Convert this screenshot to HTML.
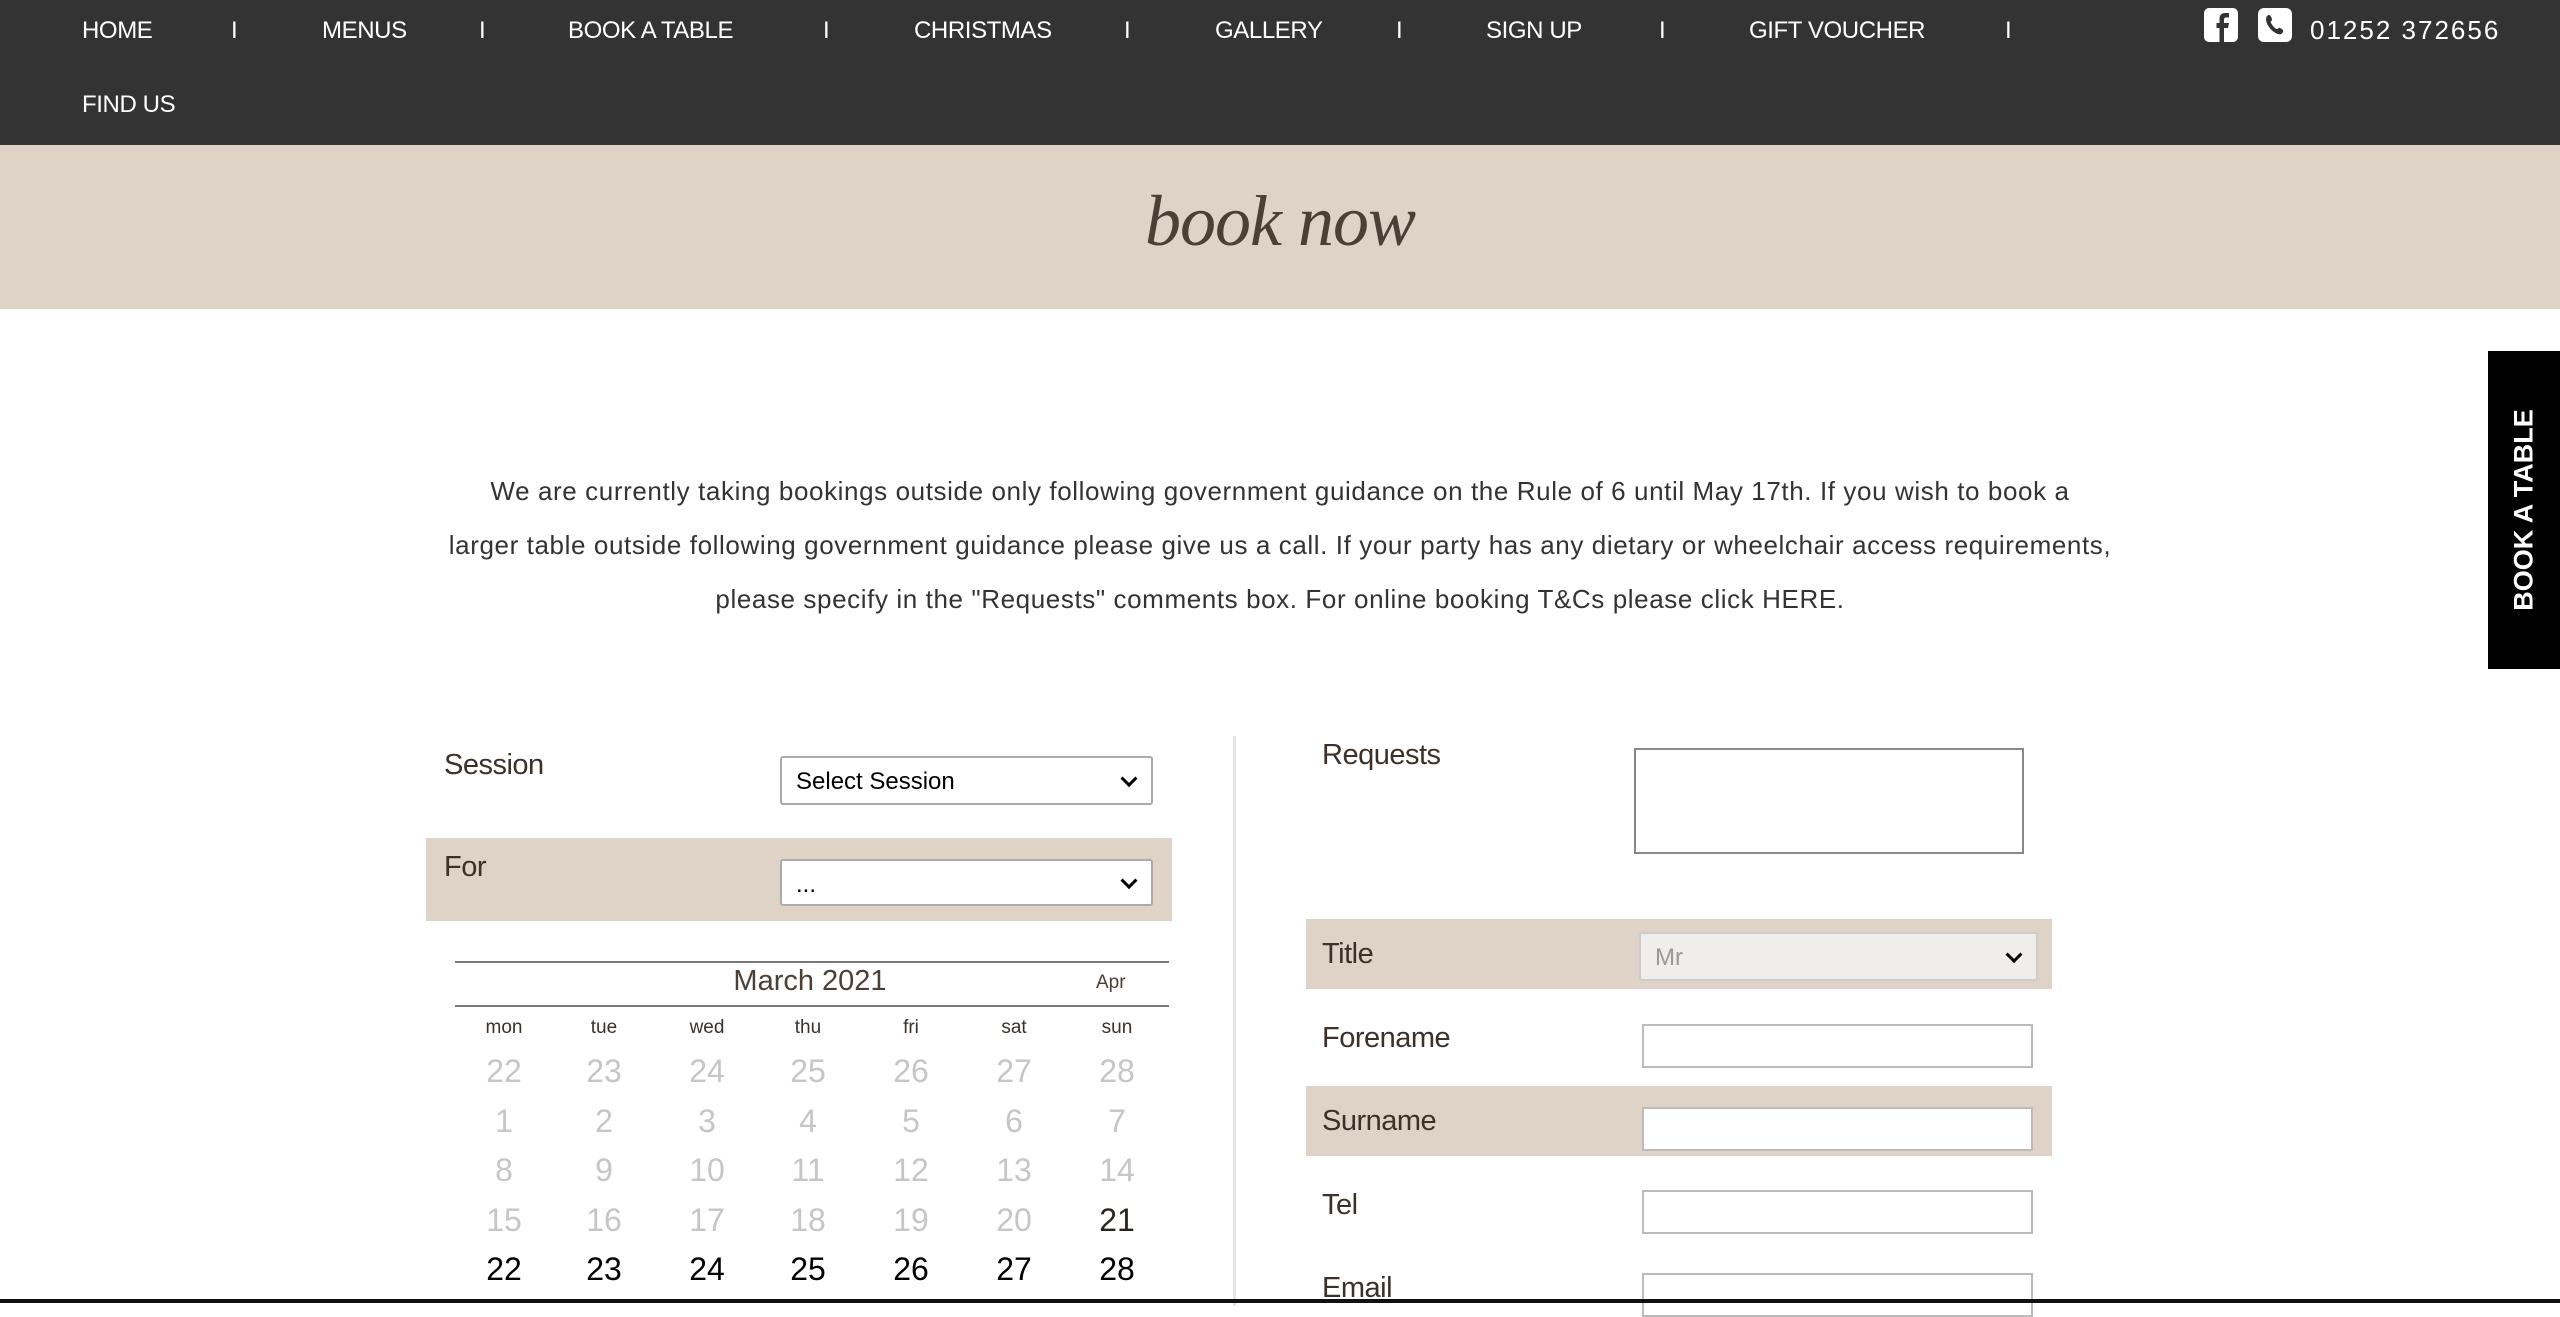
<!DOCTYPE html>
<html><head><meta charset="utf-8"><style>
*{margin:0;padding:0;box-sizing:border-box}
body{width:2560px;height:1303px;overflow:hidden;background:#fff;font-family:"Liberation Sans",sans-serif;position:relative;color:#3b3128}
.a{position:absolute;white-space:nowrap}
.nav{position:absolute;left:0;top:0;width:2560px;height:145px;background:#333}
.n{position:absolute;color:#fff;font-size:24px;top:17px;letter-spacing:-0.4px}
.band{position:absolute;left:0;top:145px;width:2560px;height:164px;background:#ded3c6}
.p{position:absolute;left:420px;width:1720px;top:464px;text-align:center;font-size:26px;line-height:54px;color:#333;letter-spacing:0.6px}
.lbl{position:absolute;font-size:29px;color:#3b3128;letter-spacing:-0.5px}
.sel{position:absolute;background:#fff;border:2px solid #aaa;border-radius:3px;font-size:24px;color:#000;padding:10px 14px}
.sel:after{content:"";position:absolute;right:16px;top:50%;width:9px;height:9px;border-right:3px solid #000;border-bottom:3px solid #000;transform:translateY(-70%) rotate(45deg)}
.inp{position:absolute;background:#fff;border:2px solid #bbb}
.bg{position:absolute;background:#ded3c6}
.c{position:absolute;width:60px;text-align:center;font-size:32px;color:#c6c6c6}
.d{position:absolute;width:60px;text-align:center;font-size:19px;color:#3b3128}
</style></head><body>
<div class="nav"></div>
<div class="n" style="left:82px">HOME</div><div class="n" style="left:231px">I</div>
<div class="n" style="left:322px">MENUS</div><div class="n" style="left:479px">I</div>
<div class="n" style="left:568px">BOOK A TABLE</div><div class="n" style="left:823px">I</div>
<div class="n" style="left:914px">CHRISTMAS</div><div class="n" style="left:1124px">I</div>
<div class="n" style="left:1215px">GALLERY</div><div class="n" style="left:1396px">I</div>
<div class="n" style="left:1486px">SIGN UP</div><div class="n" style="left:1659px">I</div>
<div class="n" style="left:1749px">GIFT VOUCHER</div><div class="n" style="left:2005px">I</div>
<div class="n" style="left:82px;top:91px">FIND US</div>
<svg class="a" style="left:2204px;top:8px" width="34" height="34" viewBox="0 0 34 34"><rect x="0" y="0" width="34" height="34" rx="5" fill="#fff"/><path d="M20 34V20h4l1-5h-5v-3c0-1.5.5-2.5 2-2.5h3V5h-4c-4 0-5.5 2.5-5.5 6v4h-3v5h3v14z" fill="#333"/></svg>
<svg class="a" style="left:2258px;top:8px" width="34" height="34" viewBox="0 0 34 34"><rect x="0" y="0" width="34" height="34" rx="6" fill="#fff"/><path d="M11 7c2 0 3 4 3 5s-2 1-1 3 4 6 6 6 1-2 3-1 4 2 3 4-3 3-5 2C14 24 9 18 8 12 8 9 9 7 11 7z" fill="#333"/></svg>
<div class="n" style="left:2310px;top:15px;letter-spacing:2px;font-size:26px">01252 372656</div>
<div class="band"></div>
<div class="a" style="left:0;width:2560px;top:180px;text-align:center;font-family:'Liberation Serif',serif;font-style:italic;font-size:72px;color:#4a4036;letter-spacing:-1px">book now</div>
<div class="a" style="left:2488px;top:351px;width:72px;height:318px;background:#000"></div>
<div class="a" style="left:2524px;top:510px;color:#fff;font-weight:bold;font-size:27px;transform:translate(-50%,-50%) rotate(-90deg)">BOOK A TABLE</div>
<div class="p">We are currently taking bookings outside only following government guidance on the Rule of 6 until May 17th. If you wish to book a<br>larger table outside following government guidance please give us a call. If your party has any dietary or wheelchair access requirements,<br>please specify in the "Requests" comments box. For online booking T&amp;Cs please click HERE.</div>

<div class="lbl" style="left:444px;top:749px">Session</div>
<div class="sel" style="left:780px;top:756px;width:373px;height:49px">Select Session</div>
<div class="bg" style="left:426px;top:838px;width:746px;height:83px"></div>
<div class="lbl" style="left:444px;top:851px">For</div>
<div class="sel" style="left:780px;top:859px;width:373px;height:47px">...</div>

<div class="a" style="left:455px;top:961px;width:714px;height:2px;background:#777"></div>
<div class="a" style="left:455px;top:1005px;width:714px;height:2px;background:#777"></div>
<div class="a" style="left:700px;top:965px;width:220px;text-align:center;font-size:29px;color:#4a4036">March 2021</div>
<div class="a" style="left:1096px;top:972px;font-size:19px;color:#4a4036">Apr</div>
<div class="d" style="left:474px;top:1017px">mon</div><div class="d" style="left:574px;top:1017px">tue</div><div class="d" style="left:677px;top:1017px">wed</div><div class="d" style="left:778px;top:1017px">thu</div><div class="d" style="left:881px;top:1017px">fri</div><div class="d" style="left:984px;top:1017px">sat</div><div class="d" style="left:1087px;top:1017px">sun</div>

<div class="c" style="left:474px;top:1053px">22</div><div class="c" style="left:574px;top:1053px">23</div><div class="c" style="left:677px;top:1053px">24</div><div class="c" style="left:778px;top:1053px">25</div><div class="c" style="left:881px;top:1053px">26</div><div class="c" style="left:984px;top:1053px">27</div><div class="c" style="left:1087px;top:1053px">28</div>
<div class="c" style="left:474px;top:1103px">1</div><div class="c" style="left:574px;top:1103px">2</div><div class="c" style="left:677px;top:1103px">3</div><div class="c" style="left:778px;top:1103px">4</div><div class="c" style="left:881px;top:1103px">5</div><div class="c" style="left:984px;top:1103px">6</div><div class="c" style="left:1087px;top:1103px">7</div>
<div class="c" style="left:474px;top:1152px">8</div><div class="c" style="left:574px;top:1152px">9</div><div class="c" style="left:677px;top:1152px">10</div><div class="c" style="left:778px;top:1152px">11</div><div class="c" style="left:881px;top:1152px">12</div><div class="c" style="left:984px;top:1152px">13</div><div class="c" style="left:1087px;top:1152px">14</div>
<div class="c" style="left:474px;top:1202px">15</div><div class="c" style="left:574px;top:1202px">16</div><div class="c" style="left:677px;top:1202px">17</div><div class="c" style="left:778px;top:1202px">18</div><div class="c" style="left:881px;top:1202px">19</div><div class="c" style="left:984px;top:1202px">20</div><div class="c" style="left:1087px;top:1202px;color:#2b2520">21</div>
<div class="c" style="left:474px;top:1251px;color:#000">22</div><div class="c" style="left:574px;top:1251px;color:#000">23</div><div class="c" style="left:677px;top:1251px;color:#000">24</div><div class="c" style="left:778px;top:1251px;color:#000">25</div><div class="c" style="left:881px;top:1251px;color:#000">26</div><div class="c" style="left:984px;top:1251px;color:#000">27</div><div class="c" style="left:1087px;top:1251px;color:#000">28</div>

<div class="a" style="left:1233px;top:736px;width:3px;height:570px;background:#e4e4e4"></div>

<div class="lbl" style="left:1322px;top:739px">Requests</div>
<div class="inp" style="left:1634px;top:748px;width:390px;height:106px;border-color:#888"></div>
<div class="bg" style="left:1306px;top:919px;width:746px;height:70px"></div>
<div class="lbl" style="left:1322px;top:938px">Title</div>
<div class="sel" style="left:1639px;top:932px;width:399px;height:49px;background:#f0eeeb;color:#999;border-color:#ccc">Mr</div>
<div class="lbl" style="left:1322px;top:1022px">Forename</div>
<div class="inp" style="left:1642px;top:1024px;width:391px;height:44px"></div>
<div class="bg" style="left:1306px;top:1086px;width:746px;height:70px"></div>
<div class="lbl" style="left:1322px;top:1105px">Surname</div>
<div class="inp" style="left:1642px;top:1107px;width:391px;height:44px"></div>
<div class="lbl" style="left:1322px;top:1189px">Tel</div>
<div class="inp" style="left:1642px;top:1190px;width:391px;height:44px"></div>
<div class="lbl" style="left:1322px;top:1272px">Email</div>
<div class="inp" style="left:1642px;top:1273px;width:391px;height:44px"></div>
<div class="a" style="left:0;top:1299px;width:2560px;height:4px;background:#111"></div>
</body></html>
